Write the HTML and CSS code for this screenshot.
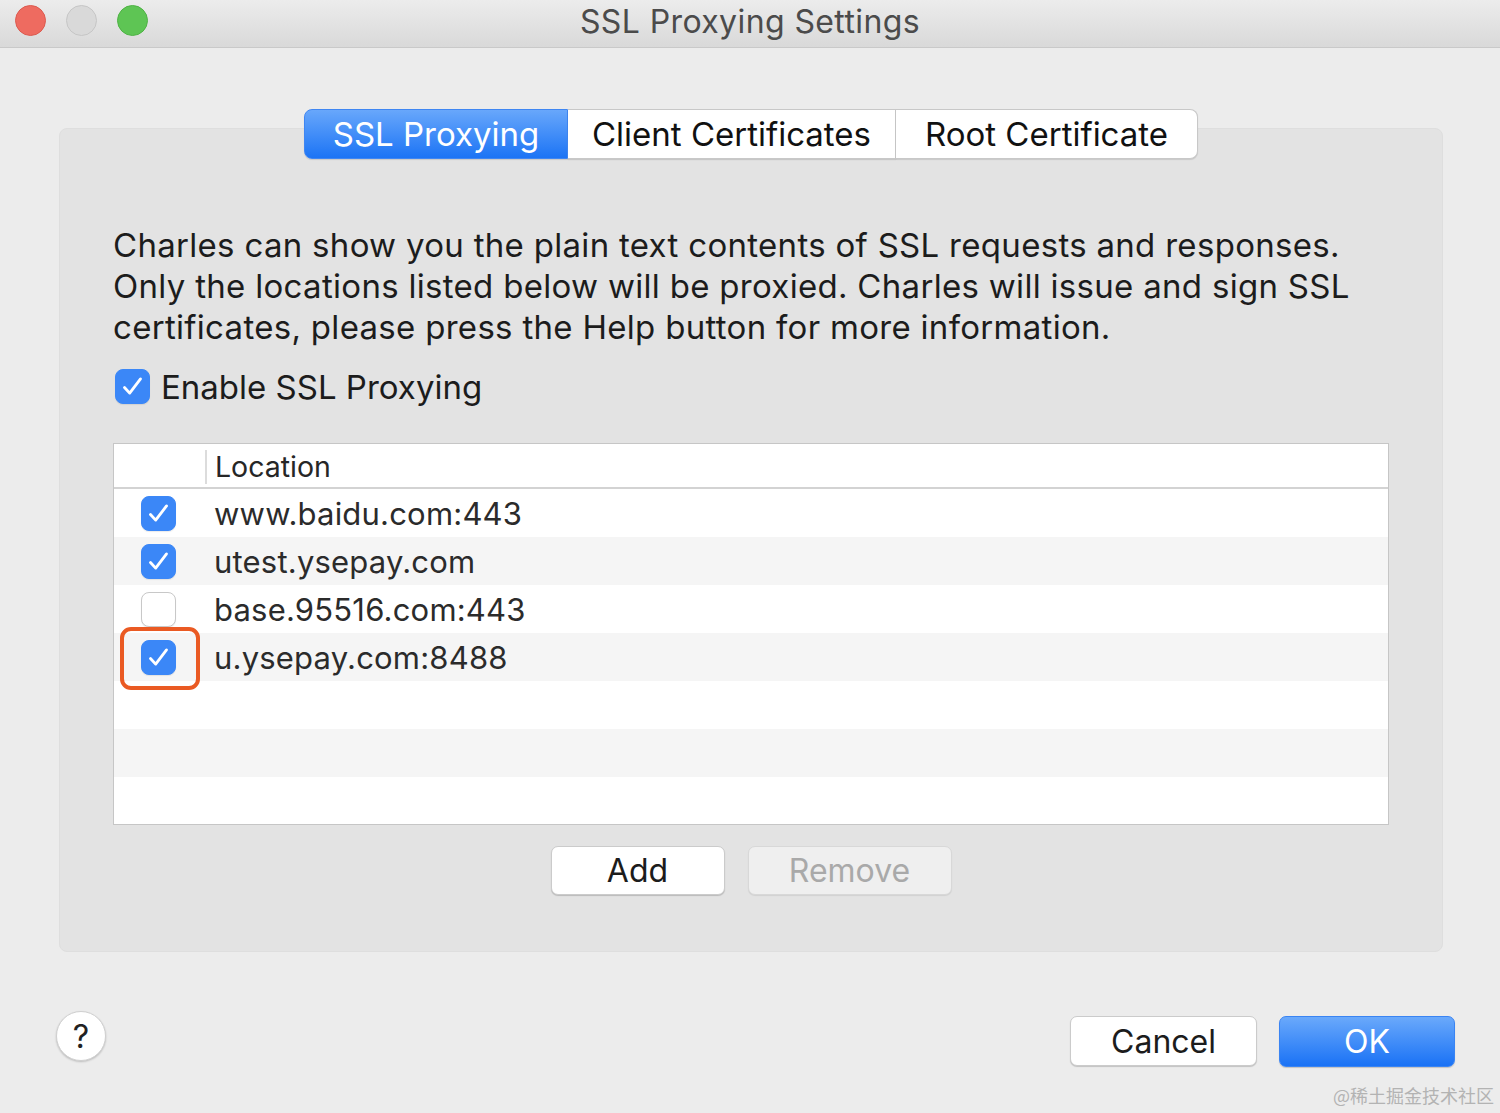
FILE: index.html
```html
<!DOCTYPE html>
<html lang="en">
<head>
  <meta charset="UTF-8" />
  <title>SSL Proxying Settings</title>
  <link rel="stylesheet" href="styles.css">
</head>
<body>
  <div class="window">
    <div class="titlebar">
      <div class="lights">
        <span class="light red"></span>
        <span class="light gray"></span>
        <span class="light green"></span>
      </div>
      <div class="title">SSL Proxying Settings</div>
      <div></div>
    </div>

    <div class="content">
      <div class="tabs">
        <div class="tab active">SSL Proxying</div>
        <div class="tab">Client Certificates</div>
        <div class="tab">Root Certificate</div>
      </div>

      <div class="panel">
        <p class="desc">Charles can show you the plain text contents of SSL requests and responses. Only the locations listed below will be proxied. Charles will issue and sign SSL certificates, please press the Help button for more information.</p>

        <label class="enable">
          <span class="check on"><svg viewBox="0 0 35 35"><path d="M9 18.5 L14.5 24.5 L26 9.5"/></svg></span>
          Enable SSL Proxying
        </label>

        <div class="table">
          <div class="thead">
            <div class="col-check"></div>
            <div class="col-loc">Location</div>
          </div>
          <div class="row">
            <div class="col-check"><span class="check on"><svg viewBox="0 0 35 35"><path d="M9 18.5 L14.5 24.5 L26 9.5"/></svg></span></div>
            <div class="col-loc">www.baidu.com:443</div>
          </div>
          <div class="row alt">
            <div class="col-check"><span class="check on"><svg viewBox="0 0 35 35"><path d="M9 18.5 L14.5 24.5 L26 9.5"/></svg></span></div>
            <div class="col-loc">utest.ysepay.com</div>
          </div>
          <div class="row">
            <div class="col-check"><span class="check"></span></div>
            <div class="col-loc">base.95516.com:443</div>
          </div>
          <div class="row alt">
            <div class="col-check marked"><span class="check on"><svg viewBox="0 0 35 35"><path d="M9 18.5 L14.5 24.5 L26 9.5"/></svg></span></div>
            <div class="col-loc">u.ysepay.com:8488</div>
          </div>
          <div class="row"></div>
          <div class="row alt"></div>
          <div class="row last"></div>
        </div>

        <div class="table-buttons">
          <button class="btn add">Add</button>
          <button class="btn remove" disabled>Remove</button>
        </div>
      </div>
    </div>

    <div class="footer">
      <button class="help">?</button>
      <div class="actions">
        <button class="btn cancel">Cancel</button>
        <button class="btn ok">OK</button>
      </div>
    </div>

    <div class="watermark">@稀土掘金技术社区</div>
  </div>
</body>
</html>
```

FILE: styles.css
```css
body {
  margin: 0;
  font-family: Inter, "Liberation Sans", "Noto Sans CJK SC", sans-serif;
  color: #1e1e1e;
}

.window {
  width: 1500px;
  height: 1113px;
  background: #ececec;
  display: flex;
  flex-direction: column;
  position: relative;
  overflow: hidden;
}

/* title bar */
.titlebar {
  height: 47px;
  border-bottom: 1px solid #c9c9c9;
  background: linear-gradient(to bottom, #ececec, #d9d9d9);
  display: grid;
  grid-template-columns: 1fr auto 1fr;
  align-items: center;
}

.lights {
  display: flex;
  gap: 20px;
  padding-left: 15px;
  margin-top: -6px;
}

.light {
  width: 29px;
  height: 29px;
  border-radius: 50%;
  border: 1px solid transparent;
}

.light.red {
  background: #ee6b60;
  border-color: #dc5a4f;
}

.light.gray {
  background: #d9d9d9;
  border-color: #c6c6c6;
}

.light.green {
  background: #5ec554;
  border-color: #4fb345;
}

.title {
  font-size: 32px;
  letter-spacing: 0.4px;
  color: #4b4b4b;
  margin-top: -4px;
}

/* tabs + group box */
.content {
  padding: 61px 57px 0 59px;
}

.tabs {
  display: flex;
  justify-content: center;
  margin-bottom: -31px;
  position: relative;
  z-index: 1;
}

.tab {
  height: 50px;
  box-sizing: border-box;
  display: flex;
  align-items: center;
  justify-content: center;
  font-size: 33px;
  background: #fff;
  border: 1px solid #c8c8c8;
  border-left: none;
  box-shadow: 0 1px 1px rgba(0, 0, 0, 0.12);
  color: #111;
}

.tab:first-child {
  border-left: 1px solid #c8c8c8;
  border-radius: 8px 0 0 8px;
}

.tab:last-child {
  border-radius: 0 8px 8px 0;
}

.tab.active {
  background: linear-gradient(to bottom, #68a7fb, #1c74f5);
  border-color: #3f86f2;
  color: #fff;
  width: 264px;
}

.tab:nth-child(2) {
  width: 328px;
}

.tab:nth-child(3) {
  width: 302px;
}

.panel {
  height: 824px;
  box-sizing: border-box;
  background: #e3e3e3;
  border: 1px solid #dedede;
  border-radius: 8px;
  padding: 96px 53px 0 53px;
}

.desc {
  margin: 0;
  font-size: 33px;
  letter-spacing: 0.3px;
  line-height: 41px;
  color: #1c1c1c;
}

.enable {
  display: flex;
  align-items: center;
  gap: 11px;
  margin: 21px 0 0 2px;
  font-size: 33px;
  height: 35px;
  color: #1c1c1c;
}

/* checkboxes */
.check {
  width: 35px;
  height: 35px;
  box-sizing: border-box;
  border-radius: 8px;
  background: #fff;
  border: 1px solid #c8c8c8;
  box-shadow: 0 1px 1px rgba(0, 0, 0, 0.08);
  display: inline-block;
  flex-shrink: 0;
}

.check.on {
  background: #3b87f7;
  border-color: #3b87f7;
}

.check svg {
  display: block;
  width: 33px;
  height: 33px;
  fill: none;
  stroke: #fff;
  stroke-width: 3;
  stroke-linecap: round;
  stroke-linejoin: round;
}

/* location table */
.table {
  margin-top: 39px;
  height: 382px;
  box-sizing: border-box;
  background: #fff;
  border: 1px solid #c6c6c6;
  display: flex;
  flex-direction: column;
}

.thead {
  height: 43px;
  display: flex;
  align-items: center;
  border-bottom: 2px solid #d3d3d3;
  font-size: 28.5px;
  color: #262626;
}

.col-check {
  width: 91px;
  display: flex;
  justify-content: center;
  margin-left: -1px;
  position: relative;
}

.thead .col-check {
  margin-left: 0;
}

.thead .col-loc {
  border-left: 2px solid #dcdcdc;
  height: 34px;
  line-height: 34px;
  margin-top: 3px;
  padding-left: 8px;
}

.row {
  height: 48px;
  display: flex;
  align-items: center;
  font-size: 31px;
  letter-spacing: 0.2px;
  color: #2b2b2b;
}

.row.alt {
  background: #f5f5f5;
}

.row.last {
  flex: 1;
}

.row .col-loc {
  padding-left: 10px;
}

.col-check.marked::after {
  content: "";
  position: absolute;
  left: 7px;
  top: -13px;
  width: 80px;
  height: 63px;
  box-sizing: border-box;
  border: 4px solid #ea5a23;
  border-radius: 11px;
}

/* buttons */
.table-buttons {
  display: flex;
  justify-content: center;
  gap: 23px;
  margin-top: 21px;
}

.btn {
  height: 49px;
  font-family: inherit;
  font-size: 32px;
  border-radius: 7px;
  background: #fff;
  border: 1px solid #cbcbcb;
  box-shadow: 0 1px 1px rgba(0, 0, 0, 0.18);
  color: #1c1c1c;
  padding: 0;
}

.btn.add {
  width: 174px;
}

.btn.remove {
  width: 204px;
  background: #efefef;
  border-color: #d8d8d8;
  color: #a9a9a9;
  box-shadow: 0 1px 1px rgba(0, 0, 0, 0.08);
}

.footer {
  display: flex;
  justify-content: space-between;
  align-items: flex-start;
  padding: 64px 45px 0 56px;
}

.help {
  width: 50px;
  height: 50px;
  border-radius: 50%;
  background: #fff;
  border: 1px solid #d0d0d0;
  box-shadow: 0 1px 2px rgba(0, 0, 0, 0.2);
  font-family: inherit;
  font-size: 32px;
  color: #222;
  margin-top: -5px;
  padding: 0;
}

.actions {
  display: flex;
  gap: 22px;
}

.btn.cancel {
  width: 187px;
  height: 50px;
}

.btn.ok {
  width: 176px;
  height: 51px;
  background: linear-gradient(to bottom, #6aa9fb, #1a72f5);
  border-color: #3a84f3;
  color: #fff;
}

.watermark {
  position: absolute;
  right: 6px;
  bottom: 5px;
  font-family: "Noto Sans CJK SC", sans-serif;
  font-size: 18px;
  color: #b3b3b3;
}
```
